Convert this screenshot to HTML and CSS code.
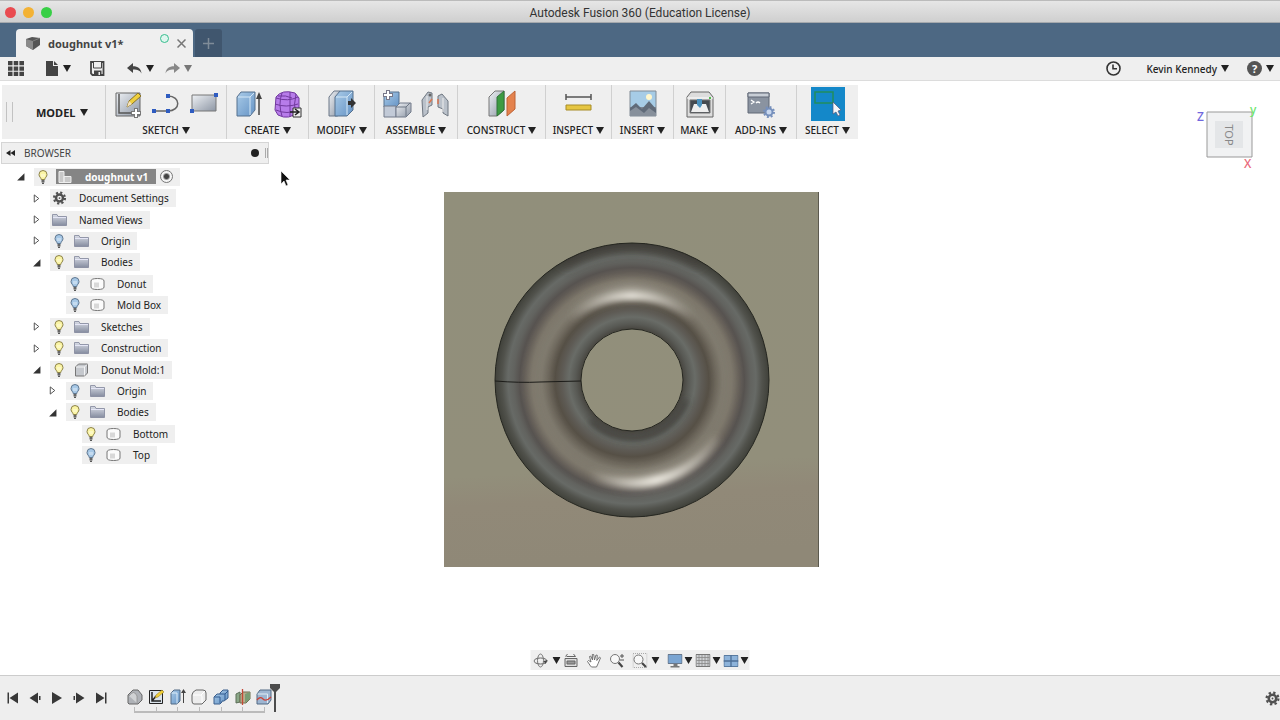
FILE: index.html
```
<!DOCTYPE html>
<html lang="en">
<head>
  <meta charset="UTF-8">
  <title>Autodesk Fusion 360 (Education License)</title>
  <link rel="stylesheet" href="styles.css">
</head>
<body>
  <!-- Shared icons -->
  <svg class="defs" aria-hidden="true">
    <defs>
      <linearGradient id="gBlue" x1="0" y1="0" x2="1" y2="1"><stop offset="0" stop-color="#a9cbe8"/><stop offset="1" stop-color="#6593c5"/></linearGradient>
      <linearGradient id="gGrey" x1="0" y1="0" x2="1" y2="1"><stop offset="0" stop-color="#eef1f5"/><stop offset="1" stop-color="#8d96a4"/></linearGradient>
      <linearGradient id="gFolder" x1="0" y1="0" x2="0" y2="1"><stop offset="0" stop-color="#d9dde6"/><stop offset="1" stop-color="#858c9f"/></linearGradient>
    </defs>
    <symbol id="caret" viewBox="0 0 8 7"><path d="M0 0h8L4 7z" fill="currentColor"/></symbol>
    <symbol id="closed" viewBox="0 0 8 10"><path d="M1.500 1v8L6.500 5z" fill="#fff" stroke="#444"/></symbol>
    <symbol id="open" viewBox="0 0 8 8"><path d="M7.500 1v6.500H1z" fill="#333"/></symbol>
    <symbol id="bulb" viewBox="0 0 10 14"><path d="M3.200 9.500C3.200 7.500 1 7 1 4.500a4 4 0 0 1 8 0C9 7 6.800 7.500 6.800 9.500z" fill="var(--bulb)" stroke="var(--bulb-line)"/><path d="M3.500 10h3v2.500h-3z" fill="#666"/><path d="M4 13.300h2" stroke="#333"/><path d="M4 7V4M6 7V4" stroke="#fff" stroke-width=".7"/></symbol>
    <symbol id="folder" viewBox="0 0 15 12"><path d="M.5 11.500V.5h4.500l1 2h8.500v9z" fill="url(#gFolder)" stroke="#80859a" stroke-width=".8"/><path d="M1 3.500h13" stroke="#eef" stroke-width=".8"/></symbol>
    <symbol id="body" viewBox="0 0 15 13"><path d="M1 3.500Q1 1 7.500 1T14 3.500v6Q14 12 7.500 12T1 9.500z" fill="#fbfbfb" stroke="#777"/><path d="M4 5h5v5H4z" fill="#d8d8d8"/></symbol>
    <symbol id="gear" viewBox="0 0 16 16"><circle cx="8" cy="8" r="4" fill="none" stroke="#505050" stroke-width="2.800"/><circle cx="8" cy="8" r="6.300" fill="none" stroke="#505050" stroke-width="2.400" stroke-dasharray="2.470 2.480"/><circle cx="8" cy="8" r="1" fill="#505050"/></symbol>
    <symbol id="cube" viewBox="0 0 14 14"><path d="M1 4l3-3h9v9l-3 3H1z" fill="#c5c8cd" stroke="#777"/><path d="M1.500 4H10v8.500M10 4l2.500-2.500" fill="none" stroke="#fff" stroke-width=".8"/></symbol>
  </svg>

  <header class="titlebar">
    <div class="lights"><i class="red"></i><i class="yellow"></i><i class="green"></i></div>
    <h1>Autodesk Fusion 360 (Education License)</h1>
  </header>

  <nav class="tabs">
    <div class="tab">
      <svg width="16" height="15" viewBox="0 0 16 15"><path d="M1 3l6-2 8 1v7l-7 5-7-4z" fill="#555"/><path d="M1 3l7 2v9l-7-4z" fill="#8a8a8a"/><path d="M8 5l7-3" stroke="#999" stroke-width=".6"/></svg>
      <span>doughnut v1*</span>
      <i class="status"></i>
      <button class="close" aria-label="Close tab"><svg width="9" height="9" viewBox="0 0 9 9"><path d="M.5.5l8 8M8.500.5l-8 8" stroke="#777" stroke-width="1.500"/></svg></button>
    </div>
    <button class="new-tab" aria-label="New tab"><svg width="11" height="11" viewBox="0 0 11 11"><path d="M5.500 0v11M0 5.500h11" stroke="#7f8c99" stroke-width="1.500"/></svg></button>
  </nav>

  <div class="quickbar">
    <button class="apps" aria-label="Data panel"><svg width="16" height="15" viewBox="0 0 16 15"><path d="M0 0h4.500v4.300H0zM5.700 0h4.500v4.300H5.700zM11.400 0H16v4.300h-4.600zM0 5.400h4.500v4.300H0zM5.700 5.400h4.500v4.300H5.700zM11.400 5.400H16v4.300h-4.600zM0 10.700h4.500V15H0zM5.700 10.700h4.500V15H5.700zM11.400 10.700H16V15h-4.600z" fill="#444"/></svg></button>
    <button class="file" aria-label="File"><svg width="13" height="15" viewBox="0 0 13 15"><path d="M0 0h7v5h5v10H0zM8 0l4 4H8z" fill="#444"/></svg><svg class="caret"><use href="#caret"/></svg></button>
    <button class="save" aria-label="Save"><svg width="15" height="15" viewBox="0 0 15 15"><path d="M1 1h12.500v13H2.500L1 12.500z" fill="none" stroke="#444" stroke-width="1.800"/><path d="M3.500 1v6h8V1" fill="#eee" stroke="#444"/><path d="M4 9.500h7.500V14H4z" fill="#444"/><path d="M8.500 11h1.500v3H8.500z" fill="#eee"/></svg></button>
    <button class="undo" aria-label="Undo"><svg width="15" height="11" viewBox="0 0 15 11"><path d="M0 5l6-5v3.300c5 0 8 2 8.500 7.200C13 7.500 11 6.500 6 6.500V10z" fill="#444"/></svg><svg class="caret"><use href="#caret"/></svg></button>
    <button class="redo" aria-label="Redo"><svg width="15" height="11" viewBox="0 0 15 11"><path d="M15 5L9 0v3.300C4 3.300 1 5.300.5 10.500 2 7.500 4 6.500 9 6.500V10z" fill="#888"/></svg><svg class="caret"><use href="#caret"/></svg></button>
    <button class="clock" aria-label="Job status"><svg width="15" height="15" viewBox="0 0 15 15"><circle cx="7.500" cy="7.500" r="6.500" fill="none" stroke="#333" stroke-width="1.600"/><path d="M7 3.500v4.300h4" fill="none" stroke="#333" stroke-width="1.600"/></svg></button>
    <button class="user">Kevin Kennedy <svg class="caret"><use href="#caret"/></svg></button>
    <button class="help" aria-label="Help"><b>?</b><svg class="caret"><use href="#caret"/></svg></button>
  </div>

  <main class="canvas">
    <div class="toolbar">
      <div class="group workspace">
        <button class="label">MODEL <svg class="caret"><use href="#caret"/></svg></button>
      </div>
      <div class="group">
        <div class="icons">
          <svg viewBox="0 0 30 30"><path d="M3 4h24v23H3z" fill="url(#gGrey)" stroke="#666"/><path d="M6 5v19h19" fill="none" stroke="#555" stroke-width="1.500"/><path d="M14 18l2-6 9-8 3 3-9 8z" fill="#efcf3e" stroke="#8a7425"/><path d="M14 18l2-6 3 3z" fill="#f5e2bd"/><path d="M23 19v10M18 24h10" stroke="#777" stroke-width="4"/><path d="M23 20v8M19 24h8" stroke="#fff" stroke-width="2"/></svg>
          <svg viewBox="0 0 30 30"><path d="M3 22h14c13 0 13-15 0-15" fill="none" stroke="#666" stroke-width="1.500"/><path d="M1 20h4v4H1zM15 20h4v4h-4zM15 5h4v4h-4z" fill="#2f5cc0"/></svg>
          <svg viewBox="0 0 30 30"><path d="M3 6h24v16H3z" fill="url(#gGrey)" stroke="#777"/><path d="M1 20h4v4H1zM25 4h4v4h-4z" fill="#2f5cc0"/></svg>
        </div>
        <button class="label">SKETCH <svg class="caret"><use href="#caret"/></svg></button>
      </div>
      <div class="group">
        <div class="icons">
          <svg viewBox="0 0 30 30"><path d="M3 8l4-5h14v18l-5 6H3z" fill="url(#gBlue)" stroke="#55708e"/><path d="M4 8h12v18M16 8l4-4" fill="none" stroke="#d5e8f7"/><path d="M25 26V8" stroke="#444" stroke-width="1.500"/><path d="M25 3l3 7h-6z" fill="#444"/></svg>
          <svg viewBox="0 0 30 30"><path d="M4 8q6-8 19-4l4 5v13q-10 10-21 4l-3-5z" fill="#b77cea" stroke="#71399e"/><path d="M4 9q12 4 22-1M3 15q11 4 23 0M4 21q11 5 22 0M10 4q-4 11 0 23M18 3v25M24 5q-3 11 0 20M6 7q8-1 14 2" fill="none" stroke="#71399e"/><path d="M21 19h8v9h-8z" fill="#eee" stroke="#333"/><path d="M18 23h8M23 20l4 3-4 3" fill="none" stroke="#222" stroke-width="1.500"/></svg>
        </div>
        <button class="label">CREATE <svg class="caret"><use href="#caret"/></svg></button>
      </div>
      <div class="group">
        <div class="icons">
          <svg viewBox="0 0 30 30"><path d="M2 8l5-6h6v24l-3 1H2z" fill="url(#gGrey)" stroke="#6b7787"/><path d="M8 8l5-6h13v19l-6 6H8z" fill="url(#gBlue)" stroke="#55708e"/><path d="M9 8h11v18M20 8l5-5" fill="none" stroke="#d5e8f7"/><path d="M21 12h3V9l5 5-5 5v-3h-3z" fill="#333"/></svg>
        </div>
        <button class="label">MODIFY <svg class="caret"><use href="#caret"/></svg></button>
      </div>
      <div class="group">
        <div class="icons">
          <svg viewBox="0 0 30 30"><path d="M2 7l4-4h11v12l-3 3H2z" fill="url(#gBlue)" stroke="#55708e"/><path d="M2 17h12v11H2z" fill="#c2cad7" stroke="#727b8a"/><path d="M14 18l4-4h11v9l-5 5H14z" fill="url(#gGrey)" stroke="#727b8a"/><path d="M14 18h10v9M24 18l4-4" fill="none" stroke="#6d7684"/><path d="M6 1v10M1 6h10" stroke="#778" stroke-width="4"/><path d="M6 2v8M2 6h8" stroke="#fff" stroke-width="2"/></svg>
          <svg viewBox="0 0 30 30"><path d="M2 11l6-8 4 1v12l-4 2v6l-5 4z" fill="#bac1ca" stroke="#6f7781"/><path d="M18 7l4-2 6 7v15l-5-3v-4l-5-2z" fill="#bac1ca" stroke="#6f7781"/><path d="M7 7v14M23 9v14" stroke="#eee"/><circle cx="10" cy="6" r="1.500" fill="#666"/><path d="M9 14l3-4M18 10v5" stroke="#dc7650" stroke-width="1.500"/></svg>
        </div>
        <button class="label">ASSEMBLE <svg class="caret"><use href="#caret"/></svg></button>
      </div>
      <div class="group">
        <div class="icons">
          <svg viewBox="0 0 30 30"><path d="M2 8l6-6h9v19l-7 6H2z" fill="url(#gGrey)" stroke="#777"/><path d="M10 8l7-6v19l-7 6z" fill="#3d9b42" stroke="#31723a"/><path d="M20 9l8-7v18l-8 7z" fill="#e4824d" stroke="#bd6235"/></svg>
        </div>
        <button class="label">CONSTRUCT <svg class="caret"><use href="#caret"/></svg></button>
      </div>
      <div class="group">
        <div class="icons">
          <svg viewBox="0 0 30 30"><path d="M2 8h25M2 5v6M27 5v6" stroke="#555" stroke-width="1.500"/><path d="M2 16h25v5H2z" fill="#e6c642" stroke="#a78c26"/></svg>
        </div>
        <button class="label">INSPECT <svg class="caret"><use href="#caret"/></svg></button>
      </div>
      <div class="group">
        <div class="icons">
          <svg viewBox="0 0 30 30"><path d="M2 2h26v25H2z" fill="#a6cce6" stroke="#808b95"/><path d="M2 18h26v9H2z" fill="#7d8794"/><path d="M2 19l6-5 6 6 7-8 7 8v7H2z" fill="#606b79"/><path d="M2 22l6-4 8 6 5-5 7 5v3H2z" fill="#87909b"/><circle cx="21" cy="8" r="3" fill="#fff7cd"/></svg>
        </div>
        <button class="label">INSERT <svg class="caret"><use href="#caret"/></svg></button>
      </div>
      <div class="group">
        <div class="icons">
          <svg viewBox="0 0 30 30"><path d="M2 8l4-5h18l4 5v20H2z" fill="#ddd" stroke="#666" stroke-linejoin="round"/><path d="M2 9h26" stroke="#fff"/><path d="M5 11h20v13H5z" fill="#454a50" stroke="#777"/><path d="M9 15h12l3 8H6z" fill="#eee"/><path d="M12 10h5v6l-2 3-3-3z" fill="#4b91bd"/><path d="M24 9h2" stroke="#51bd4d" stroke-width="2"/></svg>
        </div>
        <button class="label">MAKE <svg class="caret"><use href="#caret"/></svg></button>
      </div>
      <div class="group">
        <div class="icons">
          <svg viewBox="0 0 30 30"><path d="M2 4h21v20H2z" fill="#8a93a0" stroke="#606976"/><path d="M2 4h21v4H2z" fill="#c8ced6" stroke="#606976"/><path d="M5 11l3 2-3 2M10 14q2-2 4 0" fill="none" stroke="#fff" stroke-width="1.300"/><circle cx="23" cy="23" r="3.500" fill="#c9d8ef" stroke="#7690bc" stroke-width="2"/><circle cx="23" cy="23" r="5" fill="none" stroke="#7690bc" stroke-width="2" stroke-dasharray="1.960 1.960"/></svg>
        </div>
        <button class="label">ADD-INS <svg class="caret"><use href="#caret"/></svg></button>
      </div>
      <div class="group">
        <div class="icons">
          <svg class="active" viewBox="0 0 34 34"><path d="M4 5h18v11H4z" fill="none" stroke="#218d5e" stroke-width="1.500"/><path d="M22 15v12l3-2 2 4 2-1-2-4 3-1z" fill="#f4f7fa" stroke="#557" stroke-width=".7"/></svg>
        </div>
        <button class="label">SELECT <svg class="caret"><use href="#caret"/></svg></button>
      </div>
    </div>

    <aside class="browser">
      <div class="browser-head">
        <svg width="9" height="6" viewBox="0 0 9 6"><path d="M0 3l4.500-3v6zM4.500 3L9 0v6z" fill="#222"/></svg>
        <h2>BROWSER</h2>
        <i class="dot"></i><i class="grip"></i>
      </div>
      <ul class="tree">
        <li class="root"><svg class="twist"><use href="#open"/></svg><div class="node"><svg class="bulb on"><use href="#bulb"/></svg><span class="selected"><svg class="ico" viewBox="0 0 15 13"><path d="M1 1h5v11H1zM6 6h7v6H6z" fill="#c8c8c8" stroke="#eee"/></svg><b>doughnut v1</b></span><input type="radio" name="component" checked aria-label="Activate doughnut v1"></div></li>
        <li class="l1"><svg class="twist"><use href="#closed"/></svg><div class="node"><svg class="ico"><use href="#gear"/></svg><span>Document Settings</span></div></li>
        <li class="l1"><svg class="twist"><use href="#closed"/></svg><div class="node"><svg class="ico"><use href="#folder"/></svg><span>Named Views</span></div></li>
        <li class="l1"><svg class="twist"><use href="#closed"/></svg><div class="node"><svg class="bulb"><use href="#bulb"/></svg><svg class="ico"><use href="#folder"/></svg><span>Origin</span></div></li>
        <li class="l1"><svg class="twist"><use href="#open"/></svg><div class="node"><svg class="bulb on"><use href="#bulb"/></svg><svg class="ico"><use href="#folder"/></svg><span>Bodies</span></div></li>
        <li class="l2"><i class="twist"></i><div class="node"><svg class="bulb"><use href="#bulb"/></svg><svg class="ico"><use href="#body"/></svg><span>Donut</span></div></li>
        <li class="l2"><i class="twist"></i><div class="node"><svg class="bulb"><use href="#bulb"/></svg><svg class="ico"><use href="#body"/></svg><span>Mold Box</span></div></li>
        <li class="l1"><svg class="twist"><use href="#closed"/></svg><div class="node"><svg class="bulb on"><use href="#bulb"/></svg><svg class="ico"><use href="#folder"/></svg><span>Sketches</span></div></li>
        <li class="l1"><svg class="twist"><use href="#closed"/></svg><div class="node"><svg class="bulb on"><use href="#bulb"/></svg><svg class="ico"><use href="#folder"/></svg><span>Construction</span></div></li>
        <li class="l1"><svg class="twist"><use href="#open"/></svg><div class="node"><svg class="bulb on"><use href="#bulb"/></svg><svg class="ico"><use href="#cube"/></svg><span>Donut Mold:1</span></div></li>
        <li class="l2"><svg class="twist"><use href="#closed"/></svg><div class="node"><svg class="bulb"><use href="#bulb"/></svg><svg class="ico"><use href="#folder"/></svg><span>Origin</span></div></li>
        <li class="l2"><svg class="twist"><use href="#open"/></svg><div class="node"><svg class="bulb on"><use href="#bulb"/></svg><svg class="ico"><use href="#folder"/></svg><span>Bodies</span></div></li>
        <li class="l3"><i class="twist"></i><div class="node"><svg class="bulb on"><use href="#bulb"/></svg><svg class="ico"><use href="#body"/></svg><span>Bottom</span></div></li>
        <li class="l3"><i class="twist"></i><div class="node"><svg class="bulb"><use href="#bulb"/></svg><svg class="ico"><use href="#body"/></svg><span>Top</span></div></li>
      </ul>
    </aside>

    <!-- Mold half with the doughnut cavity -->
    <svg class="model" viewBox="0 0 375 375" role="img" aria-label="Donut mold, top view">
      <defs>
        <radialGradient id="torus" gradientUnits="userSpaceOnUse" cx="188" cy="188" r="137">
          <stop offset=".372" stop-color="#484640"/>
          <stop offset=".41" stop-color="#585954"/>
          <stop offset=".46" stop-color="#696c67"/>
          <stop offset=".51" stop-color="#5e5b55"/>
          <stop offset=".56" stop-color="#565046"/>
          <stop offset=".61" stop-color="#6b655a"/>
          <stop offset=".66" stop-color="#7b766a"/>
          <stop offset=".73" stop-color="#7a7468"/>
          <stop offset=".78" stop-color="#666059"/>
          <stop offset=".82" stop-color="#575350"/>
          <stop offset=".865" stop-color="#62635f"/>
          <stop offset=".905" stop-color="#676a66"/>
          <stop offset=".95" stop-color="#51524c"/>
          <stop offset="1" stop-color="#40413a"/>
        </radialGradient>
        <linearGradient id="face" x1="0" y1="0" x2="0.060" y2="1">
          <stop offset="0" stop-color="#918f7b"/><stop offset=".76" stop-color="#928f7b"/><stop offset=".84" stop-color="#918978"/><stop offset="1" stop-color="#8f8877"/>
        </linearGradient>
        <linearGradient id="shineTop" gradientUnits="userSpaceOnUse" x1="125" y1="0" x2="250" y2="0">
          <stop offset="0" stop-color="#f4f1e8" stop-opacity="0"/><stop offset=".5" stop-color="#f4f1e8"/><stop offset="1" stop-color="#f4f1e8" stop-opacity="0"/>
        </linearGradient>
        <linearGradient id="shineBottom" gradientUnits="userSpaceOnUse" x1="145" y1="0" x2="280" y2="0">
          <stop offset="0" stop-color="#f4f1e8" stop-opacity="0"/><stop offset=".5" stop-color="#f4f1e8"/><stop offset="1" stop-color="#f4f1e8" stop-opacity="0"/>
        </linearGradient>
        <filter id="soft" filterUnits="userSpaceOnUse" x="0" y="0" width="375" height="375"><feGaussianBlur stdDeviation="3"/></filter>
        <filter id="softer" filterUnits="userSpaceOnUse" x="0" y="0" width="375" height="375"><feGaussianBlur stdDeviation="6"/></filter>
        <clipPath id="ring"><path clip-rule="evenodd" d="M51 188a137 137 0 0 1 274 0a137 137 0 0 1-274 0zM137 188a51 51 0 0 0 102 0a51 51 0 0 0-102 0z"/></clipPath>
      </defs>
      <path d="M0 0h375v375H0z" fill="url(#face)"/>
      <path d="M374.500 0v375" stroke="#5b594e"/>
      <circle cx="188" cy="188" r="94" fill="none" stroke="url(#torus)" stroke-width="86"/>
      <g clip-path="url(#ring)" fill="none" stroke-linecap="round">
        <circle cx="188" cy="192" r="95" stroke="#8b8679" stroke-width="12" opacity=".45" filter="url(#softer)"/>
        <path d="M122 70a135 135 0 0 1 132 0" stroke="#3c3936" stroke-width="10" opacity=".6" filter="url(#softer)"/>
        <path d="M148 230a58 58 0 0 0 94-20" stroke="#35322d" stroke-width="6" opacity=".6" filter="url(#soft)"/>
        <path d="M117 134a92 92 0 0 1 142 0" stroke="url(#shineTop)" stroke-width="12" opacity=".4" filter="url(#softer)"/>
        <path d="M125 128a94 94 0 0 1 126 0" stroke="url(#shineTop)" stroke-width="7" filter="url(#soft)"/>
        <path d="M128 271a104 104 0 0 0 144-22" stroke="url(#shineBottom)" stroke-width="14" opacity=".35" filter="url(#softer)"/>
        <path d="M136 277a104 104 0 0 0 136-28" stroke="url(#shineBottom)" stroke-width="8" filter="url(#soft)"/>
      </g>
      <circle cx="188" cy="188" r="137" fill="none" stroke="#252620"/>
      <circle cx="188" cy="188" r="51" fill="none" stroke="#252620"/>
      <path d="M51 189q25 2 45 1l41-1" fill="none" stroke="#1c1c19"/>
    </svg>

    <svg class="viewcube" viewBox="0 0 66 70">
      <path d="M12 10h45v45H12z" fill="#f1f2f3" stroke="#999"/>
      <path d="M20 19h28v27H20z" fill="#e4e6e8"/>
      <text class="face" transform="translate(30 33) rotate(90)" text-anchor="middle">TOP</text>
      <text class="axis z" x="2" y="19">Z</text>
      <text class="axis y" x="55" y="12">y</text>
      <text class="axis x" x="49" y="66">X</text>
    </svg>

    <svg class="cursor" viewBox="0 0 11 17"><path d="M1 1v13l3-3 2 5 2-1-2-5h4z" fill="#111" stroke="#fff" stroke-width=".6"/></svg>

    <div class="navbar">
      <button class="orbit" aria-label="Orbit"><svg width="15" height="15" viewBox="0 0 15 15"><ellipse cx="7" cy="8" rx="6.500" ry="3" fill="none" stroke="#666"/><ellipse cx="7" cy="7.500" rx="3" ry="6.500" fill="none" stroke="#777"/><path d="M10 8l4-1-2 4z" fill="#444"/></svg><svg class="caret"><use href="#caret"/></svg></button>
      <button aria-label="Look at"><svg width="15" height="15" viewBox="0 0 15 15"><path d="M1.500 5.500h12v8h-12z" fill="#ddd" stroke="#666"/><path d="M3.500 8h8v3h-8z" fill="#999" stroke="#666"/><path d="M3 3.500h9L10 1M4 1L2 3.500" fill="none" stroke="#666"/></svg></button>
      <button aria-label="Pan"><svg width="15" height="15" viewBox="0 0 15 15"><path d="M4 13L1 8.500l1-1L4.500 9 3 3.500l1.300-.4L6 7l-.2-5.500h1.400L8 7l1.500-5 1.300.3L10.300 7.500 13 4l1 .8-2.500 6L10 14H5z" fill="#fff" stroke="#666" stroke-width=".9"/></svg></button>
      <button aria-label="Zoom"><svg width="15" height="15" viewBox="0 0 15 15"><circle cx="5.500" cy="6" r="4.500" fill="#f8f8f8" stroke="#777"/><path d="M9 9.500l4 4.500" stroke="#444" stroke-width="2.200"/><path d="M10.500 3h4M12.500 1v4M10.500 7h4" stroke="#555"/></svg></button>
      <button class="fit" aria-label="Fit"><svg width="15" height="15" viewBox="0 0 15 15"><path d="M.5.5h14v14H.5z" fill="none" stroke="#aaa" stroke-dasharray="1 1"/><circle cx="6" cy="6.500" r="4.500" fill="#f8f8f8" stroke="#777"/><path d="M9.500 10l4 4" stroke="#444" stroke-width="2.200"/></svg><svg class="caret"><use href="#caret"/></svg></button>
      <button class="display" aria-label="Display settings"><svg width="15" height="15" viewBox="0 0 15 15"><path d="M.5 1.500h14v9H.5z" fill="#7ba5d2" stroke="#69788c"/><path d="M6 11h4v2h2v1.500H3V13h3z" fill="#777"/></svg><svg class="caret"><use href="#caret"/></svg></button>
      <button aria-label="Grid and snaps"><svg width="15" height="15" viewBox="0 0 15 15"><path d="M.5 1.500h14v12H.5z" fill="#d0d2d5" stroke="#777"/><path d="M3.500 2v11M6.500 2v11M9.500 2v11M12.500 2v11M1 4.500h13M1 7.500h13M1 10.500h13" stroke="#888" stroke-width=".8"/></svg><svg class="caret"><use href="#caret"/></svg></button>
      <button aria-label="Viewports"><svg width="15" height="15" viewBox="0 0 15 15"><path d="M.5 2.500h14v11H.5z" fill="#8db3da" stroke="#5a7ba0"/><path d="M7.500 2v12M0 8h15" stroke="#4d6f96" stroke-width="1.300"/></svg><svg class="caret"><use href="#caret"/></svg></button>
    </div>
  </main>

  <footer class="timeline">
    <div class="player">
      <button aria-label="Go to start"><svg viewBox="0 0 12 12"><path d="M.5.5H2v11H.5zM11 .5v11L2.500 6z" fill="#383838"/></svg></button>
      <button aria-label="Step back"><svg viewBox="0 0 12 12"><path d="M9 .5v11L.5 6zM10 4h1.500v4H10z" fill="#383838"/></svg></button>
      <button aria-label="Play"><svg viewBox="0 0 12 12"><path d="M1 0v12l10-6z" fill="#383838"/></svg></button>
      <button aria-label="Step forward"><svg viewBox="0 0 12 12"><path d="M3 .5v11L11.500 6zM.5 4H2v4H.5z" fill="#383838"/></svg></button>
      <button aria-label="Go to end"><svg viewBox="0 0 12 12"><path d="M1 .5v11L9.500 6zM10 .5h1.500v11H10z" fill="#383838"/></svg></button>
    </div>
    <div class="history">
      <div class="features">
        <svg viewBox="0 0 16 16"><path d="M1 14V6l5-5h5l4 5v5l-4 4H2z" fill="#afb2b7" stroke="#666"/><path d="M2 7q5-7 8 0v7" fill="#d0d2d4" stroke="#888" stroke-width=".7"/></svg>
        <svg viewBox="0 0 16 16"><path d="M1.500 1.500h13v13h-13z" fill="#dbe4ec" stroke="#222"/><path d="M4 3v9h9M4 12l4-5" fill="none" stroke="#222" stroke-width="1.500"/><path d="M7 9l1-3 6-5 2 2-6 5z" fill="#f1cf37" stroke="#8a7425" stroke-width=".5"/></svg>
        <svg viewBox="0 0 16 16"><path d="M1 4l3-3h6v11l-3 3H1z" fill="url(#gBlue)" stroke="#526a85"/><path d="M1.500 4H7v10.500" fill="none" stroke="#deedf8"/><path d="M13.500 14V3" stroke="#444"/><path d="M11 4l2.500-4L16 4z" fill="#444"/></svg>
        <svg viewBox="0 0 16 16"><path d="M1 6q0-3 4-5h7q3 0 3 3v7l-4 4H3q-2 0-2-3z" fill="#ececec" stroke="#666"/><path d="M2 6h7q2 0 2 2v6M10 6l4-4" fill="none" stroke="#fff"/></svg>
        <svg viewBox="0 0 16 16"><path d="M1 8l3-3h3V4l3-3h5v8l-4 3H9v1l-2 2H1z" fill="url(#gBlue)" stroke="#3b5f8c"/><path d="M1.500 8H7v6M7 5h5v6M12 5l3-3" fill="none" stroke="#315b91"/></svg>
        <svg viewBox="0 0 16 16"><path d="M1 5l4-2v10l-4 1z" fill="#8aa787" stroke="#5c6e59"/><path d="M5 6l3-3h7v7l-4 4H5z" fill="#b9ad8e" stroke="#6e6f50"/><path d="M10 5v9l5-4V3z" fill="#799c73"/><path d="M7.500 0v16" stroke="#c44836" stroke-width="1.300"/></svg>
        <svg viewBox="0 0 16 16"><path d="M1 5l3-4h11v10l-3 4H1z" fill="#9eb6d2" stroke="#526a85"/><path d="M1.500 5h10v9" fill="none" stroke="#e2edf6"/><path d="M1 11q3-4 6-1t8-2" fill="none" stroke="#cd4337" stroke-width="1.300"/></svg>
      </div>
      <div class="track"><i></i><i></i><i></i><i></i><i></i><i></i></div>
      <svg class="marker" viewBox="0 0 12 28"><path d="M1 0h10v4L7 8v20H5V8L1 4z" fill="#4c4c4c"/></svg>
    </div>
    <button class="settings" aria-label="Timeline settings"><svg width="15" height="15"><use href="#gear"/></svg></button>
  </footer>
</body>
</html>
```
FILE: styles.css
```
* {
  box-sizing: border-box;
}
body {
  margin: 0;
  min-height: 100vh;
  display: flex;
  flex-direction: column;
  overflow: hidden;
  background: #fff;
  color: #222;
  font-family: "Noto Sans", sans-serif;
  font-size: 10px;
}
button {
  display: flex;
  align-items: center;
  padding: 0;
  border: 0;
  background: none;
  color: inherit;
  font: inherit;
}
svg {
  display: block;
  flex: none;
}
.defs {
  position: absolute;
  width: 0;
  height: 0;
}
.caret {
  width: 8px;
  height: 7px;
}

/* Window title */
.titlebar {
  display: grid;
  grid-template-columns: 1fr auto 1fr;
  align-items: center;
  height: 23px;
  padding-top: 2px;
  background: linear-gradient(#e6e6e6, #cfcfcf);
  border-top: 1px solid #bbb;
  border-bottom: 1px solid #a5a9ad;
}
.titlebar h1 {
  margin: 0;
  font: 12px/16px Roboto, sans-serif;
  color: #333;
}
.lights {
  display: flex;
  gap: 7px;
  padding-left: 5px;
}
.lights i {
  width: 11px;
  height: 11px;
  border-radius: 50%;
}
.red { background: #e94b50; }
.yellow { background: #f3b234; }
.green { background: #38cf46; }

/* Document tabs */
.tabs {
  display: flex;
  gap: 2px;
  height: 34px;
  padding: 6px 16px 0;
  background: #4d6883;
}
.tab {
  display: flex;
  align-items: center;
  width: 177px;
  padding: 0 7px 0 9px;
  border-radius: 4px 4px 0 0;
  background: #efefef;
  color: #444;
  font-size: 11px;
  font-weight: bold;
}
.tab span {
  margin-left: 7px;
}
.status {
  width: 9px;
  height: 9px;
  margin: 0 8px 10px auto;
  border: 1px solid #35bd8d;
  border-radius: 50%;
  background: #dff5ee;
}
.new-tab {
  width: 27px;
  justify-content: center;
  border-radius: 3px 3px 0 0;
  background: #40566e;
}

/* Quick access bar */
.quickbar {
  display: flex;
  align-items: center;
  height: 24px;
  padding: 0 6px 0 8px;
  background: #efefef;
  border-bottom: 1px solid #dcdcdc;
}
.quickbar button { gap: 4px; }
.file { margin-left: 22px; }
.save { margin-left: 19px; }
.undo { margin-left: 22px; }
.redo { margin-left: 11px; }
.redo .caret { color: #777; }
.clock { margin-left: auto; }
.user {
  margin-left: 25px;
  font-weight: 500;
}
.help { margin-left: 18px; }
.help b {
  width: 15px;
  border-radius: 50%;
  background: #555;
  color: #fff;
  font-size: 11px;
  line-height: 15px;
  text-align: center;
}

/* Canvas holds the model, the tools lie over it */
.canvas {
  position: relative;
  flex: 1;
  display: flex;
  align-items: center;
  justify-content: center;
  padding-right: 18px;
}
.model {
  width: 375px;
  height: 375px;
  margin-top: 3px;
}
.toolbar {
  position: absolute;
  top: 4px;
  left: 2px;
  display: grid;
  grid-template-columns: 104px 121px 82px 66px 83px 88px 66px 62px 52px 71px 61px;
  background: #efefef;
}
.group {
  display: flex;
  flex-direction: column;
  align-items: center;
  border-right: 1px solid #d0d0d0;
}
.group:last-child { border: 0; }
.icons {
  display: flex;
  align-items: center;
  gap: 8px;
  height: 37px;
}
.icons svg {
  width: 30px;
  height: 30px;
}
.icons .active {
  width: 34px;
  height: 34px;
  background: #1488c9;
}
.label {
  gap: 3px;
  height: 17px;
  line-height: 17px;
  font-weight: 500;
}
.workspace {
  flex-direction: row;
  gap: 23px;
  padding: 0 0 0 4px;
}
.workspace::before {
  content: "";
  width: 5px;
  height: 20px;
  border: solid #c2c2c2;
  border-width: 0 1px;
}
.workspace .label {
  gap: 5px;
  font-size: 11px;
  font-weight: bold;
}

/* Browser tree */
.browser {
  position: absolute;
  top: 61px;
  left: 1px;
  width: 268px;
}
.browser-head {
  display: flex;
  align-items: center;
  height: 22px;
  padding-left: 4px;
  background: #efefef;
  border: 1px solid #d5d5d5;
}
.browser-head h2 {
  flex: 1;
  margin: 0 0 0 9px;
  font-size: 10px;
  font-weight: normal;
  color: #444;
}
.dot {
  width: 8px;
  height: 8px;
  border-radius: 4px;
  background: #222;
}
.grip {
  width: 3px;
  height: 10px;
  margin-left: 6px;
  border: solid #aaa;
  border-width: 0 1px;
}
.tree {
  display: grid;
  grid-auto-rows: 1fr;
  min-height: 300px;
  margin: 2px 0 0;
  padding: 0 0 0 15px;
  list-style: none;
}
.tree li {
  display: flex;
  align-items: center;
  gap: 9px;
}
.l1 { padding-left: 16px; }
.l2 { padding-left: 32px; }
.l3 { padding-left: 48px; }
.twist {
  width: 9px;
  height: 9px;
}
.node {
  display: flex;
  align-items: center;
  height: 18px;
  padding: 0 7px 0 2px;
  background: #efefef;
}
.node > span { margin-left: 12px; }
.bulb {
  width: 14px;
  height: 14px;
  margin-right: 8px;
  --bulb: #a7c8e6;
  --bulb-line: #5f7790;
}
.bulb.on {
  --bulb: #fbf5a5;
  --bulb-line: #8c8248;
}
.ico {
  width: 15px;
  height: 14px;
}
.node .selected {
  display: flex;
  align-items: center;
  gap: 12px;
  height: 15px;
  margin: 0 4px 0 -2px;
  padding: 0 8px 0 2px;
  background: #858585;
  color: #fff;
}
.node input {
  appearance: none;
  width: 13px;
  height: 13px;
  margin: 0;
  border: 1px solid #777;
  border-radius: 50%;
  background: radial-gradient(#444 2px, #f5f5f5 4px);
}

.viewcube {
  position: absolute;
  top: 21px;
  right: 19px;
  width: 66px;
  height: 70px;
}
.viewcube .face {
  font-size: 11px;
  fill: #888;
}
.viewcube .axis {
  font-size: 12px;
  font-weight: 500;
}
.z { fill: #7067dd; }
.y { fill: #6de56d; }
.x { fill: #e9687a; }
.cursor {
  position: absolute;
  top: 89px;
  left: 280px;
  width: 11px;
  height: 17px;
}

/* View controls */
.navbar {
  position: absolute;
  bottom: 5px;
  left: 50%;
  transform: translateX(-50%);
  display: flex;
  align-items: center;
  gap: 8px;
  height: 20px;
  padding: 0 1px 0 3px;
  background: #efefef;
}
.navbar button { gap: 2px; }
.navbar .orbit {
  gap: 4px;
  margin-right: -5px;
}
.navbar .fit { gap: 4px; }
.navbar .display ~ button { margin-left: -5px; }

/* Timeline */
.timeline {
  display: flex;
  align-items: center;
  height: 45px;
  padding-left: 2px;
  background: #eee;
  border-top: 1px solid #ccc;
}
.player { display: flex; }
.player button {
  width: 22px;
  justify-content: center;
}
.player svg {
  width: 12px;
  height: 12px;
}
.history {
  position: relative;
  width: 151px;
  margin-left: 12px;
  padding-top: 6px;
}
.features {
  display: grid;
  grid-template-columns: repeat(7, 1fr);
  justify-items: center;
}
.features svg {
  width: 16px;
  height: 16px;
}
.track {
  display: flex;
  margin: 2px 10px 0;
  border: solid #bbb;
  border-width: 0 0 2px 1px;
}
.track i {
  flex: 1;
  height: 4px;
  border-right: 1px solid #bbb;
}
.marker {
  position: absolute;
  top: 1px;
  right: -6px;
  width: 12px;
  height: 28px;
}
.settings {
  margin-left: auto;
}
```
